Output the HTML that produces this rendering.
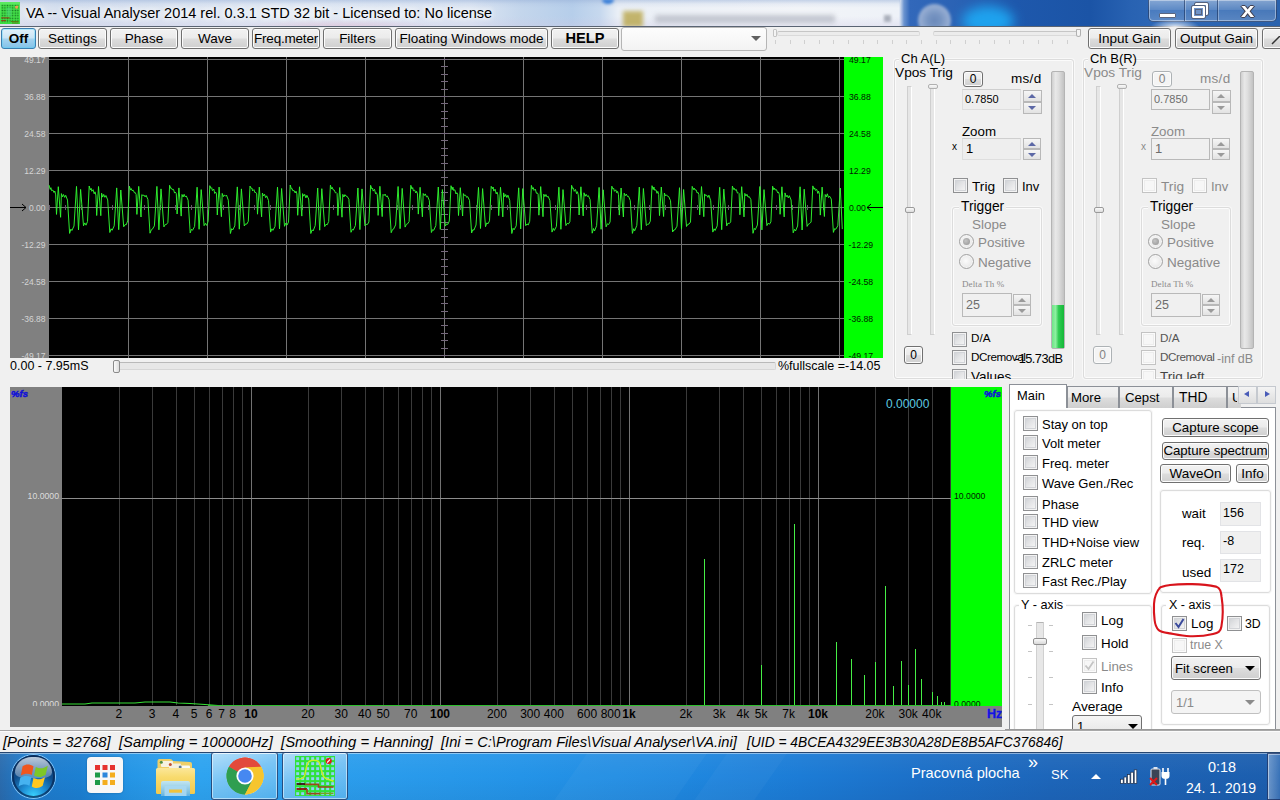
<!DOCTYPE html>
<html lang="en">
<head>
<meta charset="utf-8">
<title>VA -- Visual Analyser 2014 rel. 0.3.1 STD 32 bit - Licensed to: No license</title>
<style>
*{box-sizing:border-box;margin:0;padding:0}
html,body{width:1280px;height:800px;overflow:hidden;background:#f0f0f0}
body{position:relative;font-family:"Liberation Sans",sans-serif;font-size:13px;color:#000}
.a{position:absolute}
.t{position:absolute;white-space:nowrap;line-height:1}
.btn{position:absolute;border:1px solid #707070;border-radius:3px;background:linear-gradient(#f2f2f2 0%,#ebebeb 48%,#dddddd 52%,#cfcfcf 100%);box-shadow:inset 0 0 0 1px #fcfcfc;text-align:center;white-space:nowrap;font-size:13.5px;line-height:19px;color:#000;overflow:hidden}
.btn.dis{border-color:#adb2b5;background:#f4f4f4;color:#838383}
.cb{position:absolute;width:15px;height:15px;border:1px solid #8f9092;background:linear-gradient(135deg,#c9ccd0 0%,#e2e3e5 45%,#f9f9f9 100%);box-shadow:inset 0 0 0 1px #f3f3f3,inset 0 0 0 2px #d2d4d8}
.cb.dis{border-color:#c3c3c3;box-shadow:inset 0 0 0 1px #fbfbfb,inset 0 0 0 2px #ededed;background:#f7f7f7}
.rb{position:absolute;width:15px;height:15px;border:1px solid #a2a2a2;border-radius:50%;background:radial-gradient(circle at 45% 45%,#fbfbfb 0%,#ececec 55%,#d6d6d6 100%);box-shadow:inset 0 0 0 1px #f6f6f6}
.gb{position:absolute;border:1px solid #dcdcdc;border-radius:3px;box-shadow:inset 0 0 0 1px #fbfbfb,0 0 0 1px #f8f8f8}
.ed{position:absolute;border:1px solid #dedede;border-top-color:#cfcfcf;background:#eeeeee;font-size:12px;line-height:17px;padding-left:3px;white-space:nowrap}
.ed.dis{border-color:#b9b9b9;color:#6d6d6d;background:#f0f0f0}
.spin{position:absolute;width:17px;height:11px;border:1px solid #b8b8b8;background:linear-gradient(#f6f6f6,#e2e2e2)}
.spin i{position:absolute;left:4px;width:0;height:0;border-left:4.5px solid transparent;border-right:4.5px solid transparent}
.spin.u i{top:3px;border-bottom:4px solid #5c68a6}
.spin.d i{top:3px;border-top:4px solid #5c68a6}
.spin.dis.u i{border-bottom-color:#9a9a9a}
.spin.dis.d i{border-top-color:#9a9a9a}
.g{color:#8a8a8a}

.ed.ro{border-color:#e2e3e6;background:#f0f0f0;padding-left:2px;font-size:12.5px !important}
.gb{pointer-events:none}
.lbl{position:absolute;white-space:nowrap;line-height:1;font-size:14px}
</style>
</head>
<body>
<!-- title bar (aero glass) -->
<div class="a" id="titlebar" style="left:0;top:0;width:1280px;height:27px;overflow:hidden;background:linear-gradient(90deg,#e3e8f0 0px,#d6e0ef 60px,#e4ebf5 300px,#dde6f3 470px,#c4d6ec 520px,#b6ceea 572px,#c6d8ee 600px,#eaeff6 618px,#f2f4f8 800px,#eef2f8 899px,#6a93cf 904px,#3268ba 910px,#2a62b4 960px,#1e58ac 1015px,#1b54a6 1090px,#2862b2 1130px,#2e68b6 1160px,#2a62ad 1280px)">
  <div class="a" style="left:0;top:0;width:900px;height:27px;background:linear-gradient(180deg,rgba(150,175,215,.5) 0,rgba(150,175,215,.12) 4px,rgba(255,255,255,0) 8px,rgba(255,255,255,0) 60%,rgba(205,200,228,.35) 100%)"></div>
  <div class="a" style="left:240px;top:19px;width:200px;height:8px;background:radial-gradient(ellipse at 50% 100%,rgba(225,170,195,.4),rgba(225,170,195,0) 70%)"></div>
  <div class="a" style="left:623px;top:11px;width:20px;height:16px;background:#b9a64a;filter:blur(2px);opacity:.8"></div>
  <div class="a" style="left:655px;top:15px;width:180px;height:8px;background:#b8bcc6;filter:blur(2.5px);opacity:.8"></div>
  <div class="a" style="left:918px;top:4px;width:33px;height:33px;border-radius:50%;background:radial-gradient(circle,#6f8cba 0%,#7f9ac4 30%,#9db2d4 60%,#a6bad8 100%);filter:blur(1.5px);opacity:.92"></div>
  <div class="a" style="left:884px;top:15px;width:7px;height:7px;background:#9aa0ac;filter:blur(1.5px);opacity:.8"></div>
  <div class="a" style="left:962px;top:6px;width:52px;height:30px;border-radius:50%;background:#1ea6f2;filter:blur(6px);opacity:.95"></div>
  <div class="a" style="left:602px;top:-1px;width:12px;height:5px;border-radius:0 0 6px 6px;background:#3a7fd8;filter:blur(1.5px)"></div>
</div>
<div class="a" style="left:0;top:26px;width:1280px;height:1px;background:#5a6473"></div>
<!-- app icon -->
<svg class="a" style="left:0px;top:2px" width="20" height="22" viewBox="0 0 20 22">
  <defs><pattern id="icg" x="1" y="2" width="2.6" height="2.6" patternUnits="userSpaceOnUse"><rect width="2.6" height="2.6" fill="#45e64a"/><rect x=".6" y=".6" width="1.4" height="1.4" fill="#0a5a16"/></pattern>
  <linearGradient id="icb" x1="0" y1="0" x2="0" y2="1"><stop offset="0" stop-color="#5cea62"/><stop offset="1" stop-color="#38e040"/></linearGradient></defs>
  <rect width="20" height="22" fill="url(#icb)"/>
  <rect x="1" y="2.5" width="18" height="18.2" fill="url(#icg)" opacity=".85"/>
  <rect x="6.5" y="5.5" width="5" height="9" fill="#4fdc7c" opacity=".55"/>
  <path d="M15 4.2 L18.3 3.6 L17.6 6.8 L15.4 6.4 Z" fill="#f0a050"/>
  <path d="M1.2 15.8 H9.5 M1.2 18.6 H6" stroke="#8a4a18" stroke-width="1.3" opacity=".9"/>
  <path d="M11 19.5 H18.6 M12 21 H18.6" stroke="#5a7a10" stroke-width="1" opacity=".9"/>
</svg>
<div class="t" style="left:26px;top:6px;font-size:14.5px;color:#000;text-shadow:0 0 6px #fff,0 0 6px #fff">VA -- Visual Analyser 2014 rel. 0.3.1 STD 32 bit - Licensed to: No license</div>
<!-- window buttons -->
<div class="a" style="left:1148px;top:-1px;width:129px;height:23px;border:1px solid rgba(20,40,80,.6);border-radius:0 0 5px 5px;background:linear-gradient(rgba(255,255,255,.42),rgba(255,255,255,.24) 45%,rgba(255,255,255,.14) 50%,rgba(255,255,255,.22));box-shadow:inset 0 0 0 1px rgba(255,255,255,.4)"></div>
<div class="a" style="left:1150px;top:19px;width:50px;height:8px;background:radial-gradient(ellipse at 50% 100%,rgba(255,255,255,.85),rgba(255,255,255,0) 70%)"></div>
<div class="a" style="left:1184px;top:0;width:1px;height:21px;background:rgba(20,40,80,.55);box-shadow:1px 0 0 rgba(255,255,255,.3)"></div>
<div class="a" style="left:1217px;top:0;width:1px;height:21px;background:rgba(20,40,80,.55);box-shadow:1px 0 0 rgba(255,255,255,.3)"></div>
<div class="a" style="left:1159px;top:13px;width:17px;height:5px;background:#fff;border:1px solid #5a6680;border-radius:1px"></div>
<div class="a" style="left:1195px;top:3px;width:13px;height:12px;border:2px solid #fff;outline:1px solid #56627c;border-radius:1px"></div>
<div class="a" style="left:1192px;top:6px;width:13px;height:12px;border:2px solid #fff;outline:1px solid #56627c;background:#6f93c8;border-radius:1px"></div>
<div class="a" style="left:1196px;top:10px;width:5px;height:4px;outline:1px solid #56627c"></div>
<div class="t" style="left:1241px;top:0px;font-size:20px;font-weight:bold;color:#fff;text-shadow:0 0 1px #334,1px 0 0 #445,-1px 0 0 #445,0 1px 0 #445,0 -1px 0 #445;transform:scaleX(1.2);transform-origin:0 0">x</div>
<!-- toolbar -->
<div class="a" style="left:0;top:27px;width:1280px;height:24px;background:#f0f0f0"></div>
<div class="btn" style="left:1px;top:28px;width:35px;height:21px;font-weight:bold;border-color:#3c7fb1;background:linear-gradient(#e3f1fa 0%,#c9e4f5 48%,#a5d3ef 52%,#84c2e8 100%);box-shadow:inset 0 0 0 1px #48d8fb55">Off</div>
<div class="btn" style="left:38px;top:28px;width:69px;height:21px">Settings</div>
<div class="btn" style="left:110px;top:28px;width:68px;height:21px">Phase</div>
<div class="btn" style="left:181px;top:28px;width:68px;height:21px">Wave</div>
<div class="btn" style="left:252px;top:28px;width:68px;height:21px;letter-spacing:-.2px">Freq.meter</div>
<div class="btn" style="left:323px;top:28px;width:69px;height:21px">Filters</div>
<div class="btn" style="left:395px;top:28px;width:153px;height:21px">Floating Windows mode</div>
<div class="btn" style="left:551px;top:28px;width:68px;height:21px;font-weight:bold;font-size:14.6px;line-height:18px">HELP</div>
<div class="a" style="left:621px;top:27px;width:146px;height:24px;border:1px solid #b5b5b5;border-radius:3px;background:linear-gradient(#fdfdfd,#f3f3f3)"></div>
<div class="a" style="left:751px;top:36px;width:0;height:0;border-left:5px solid transparent;border-right:5px solid transparent;border-top:5px solid #606060"></div>
<!-- toolbar sliders -->
<div class="a" style="left:777px;top:31px;width:143px;height:5px;border:1px solid #dadada;border-top-color:#c6c6c6;background:#ececec;border-radius:2px"></div>
<div class="a" style="left:933px;top:31px;width:145px;height:5px;border:1px solid #dadada;border-top-color:#c6c6c6;background:#ececec;border-radius:2px"></div>
<div class="a" style="left:773px;top:29px;width:4px;height:8px;border:1px solid #c4c4c4;background:#f4f4f4;border-radius:1px"></div>
<div class="a" style="left:1076px;top:29px;width:5px;height:8px;border:1px solid #b0b0b0;background:#f4f4f4;border-radius:1px 1px 3px 3px"></div>
<div class="a" style="left:775px;top:40px;width:306px;height:4px;background:repeating-linear-gradient(90deg,#d0d0d0 0,#d0d0d0 1px,transparent 1px,transparent 14.6px)"></div>
<div class="btn" style="left:1088px;top:28px;width:83px;height:21px">Input Gain</div>
<div class="btn" style="left:1175px;top:28px;width:83px;height:21px">Output Gain</div>
<div class="btn" style="left:1262px;top:28px;width:30px;height:21px;border-radius:3px 0 0 3px"></div>
<svg class="a" style="left:1270px;top:36px" width="10" height="10"><path d="M2 8 L10 0" stroke="#333" stroke-width="1.5" fill="none"/></svg>
<!-- oscilloscope -->
<svg class="a" style="left:10px;top:57px" width="873" height="301" viewBox="0 0 873 301" shape-rendering="crispEdges">
<rect x="0" y="0" width="39" height="301" fill="#808080"/>
<rect x="39" y="0" width="795" height="301" fill="#000"/>
<rect x="834" y="0" width="39" height="301" fill="#00ff00"/>
<rect x="118" y="0" width="1" height="301" fill="#747474"/><rect x="197" y="0" width="1" height="301" fill="#747474"/><rect x="276" y="0" width="1" height="301" fill="#747474"/><rect x="355" y="0" width="1" height="301" fill="#747474"/><rect x="434" y="0" width="1" height="301" fill="#747474"/><rect x="513" y="0" width="1" height="301" fill="#747474"/><rect x="592" y="0" width="1" height="301" fill="#747474"/><rect x="671" y="0" width="1" height="301" fill="#747474"/><rect x="750" y="0" width="1" height="301" fill="#747474"/><rect x="829" y="0" width="1" height="301" fill="#747474"/><rect x="39" y="2" width="795" height="1" fill="#747474"/><rect x="39" y="39" width="795" height="1" fill="#747474"/><rect x="39" y="76" width="795" height="1" fill="#747474"/><rect x="39" y="113" width="795" height="1" fill="#747474"/><rect x="39" y="150" width="795" height="1" fill="#747474"/><rect x="39" y="187" width="795" height="1" fill="#747474"/><rect x="39" y="224" width="795" height="1" fill="#747474"/><rect x="39" y="261" width="795" height="1" fill="#747474"/><rect x="39" y="298" width="795" height="1" fill="#747474"/><rect x="431" y="2" width="7" height="1" fill="#75687c"/><rect x="431" y="9" width="7" height="1" fill="#75687c"/><rect x="431" y="17" width="7" height="1" fill="#75687c"/><rect x="431" y="24" width="7" height="1" fill="#75687c"/><rect x="431" y="32" width="7" height="1" fill="#75687c"/><rect x="431" y="39" width="7" height="1" fill="#75687c"/><rect x="431" y="46" width="7" height="1" fill="#75687c"/><rect x="431" y="54" width="7" height="1" fill="#75687c"/><rect x="431" y="61" width="7" height="1" fill="#75687c"/><rect x="431" y="69" width="7" height="1" fill="#75687c"/><rect x="431" y="76" width="7" height="1" fill="#75687c"/><rect x="431" y="83" width="7" height="1" fill="#75687c"/><rect x="431" y="91" width="7" height="1" fill="#75687c"/><rect x="431" y="98" width="7" height="1" fill="#75687c"/><rect x="431" y="106" width="7" height="1" fill="#75687c"/><rect x="431" y="113" width="7" height="1" fill="#75687c"/><rect x="431" y="120" width="7" height="1" fill="#75687c"/><rect x="431" y="128" width="7" height="1" fill="#75687c"/><rect x="431" y="135" width="7" height="1" fill="#75687c"/><rect x="431" y="143" width="7" height="1" fill="#75687c"/><rect x="431" y="150" width="7" height="1" fill="#75687c"/><rect x="431" y="157" width="7" height="1" fill="#75687c"/><rect x="431" y="165" width="7" height="1" fill="#75687c"/><rect x="431" y="172" width="7" height="1" fill="#75687c"/><rect x="431" y="180" width="7" height="1" fill="#75687c"/><rect x="431" y="187" width="7" height="1" fill="#75687c"/><rect x="431" y="194" width="7" height="1" fill="#75687c"/><rect x="431" y="202" width="7" height="1" fill="#75687c"/><rect x="431" y="209" width="7" height="1" fill="#75687c"/><rect x="431" y="217" width="7" height="1" fill="#75687c"/><rect x="431" y="224" width="7" height="1" fill="#75687c"/><rect x="431" y="231" width="7" height="1" fill="#75687c"/><rect x="431" y="239" width="7" height="1" fill="#75687c"/><rect x="431" y="246" width="7" height="1" fill="#75687c"/><rect x="431" y="254" width="7" height="1" fill="#75687c"/><rect x="431" y="261" width="7" height="1" fill="#75687c"/><rect x="431" y="268" width="7" height="1" fill="#75687c"/><rect x="431" y="276" width="7" height="1" fill="#75687c"/><rect x="431" y="283" width="7" height="1" fill="#75687c"/><rect x="431" y="291" width="7" height="1" fill="#75687c"/><rect x="431" y="298" width="7" height="1" fill="#75687c"/><rect x="39" y="148" width="1" height="5" fill="#66586a"/><rect x="55" y="148" width="1" height="5" fill="#66586a"/><rect x="71" y="148" width="1" height="5" fill="#66586a"/><rect x="86" y="148" width="1" height="5" fill="#66586a"/><rect x="102" y="148" width="1" height="5" fill="#66586a"/><rect x="118" y="148" width="1" height="5" fill="#66586a"/><rect x="134" y="148" width="1" height="5" fill="#66586a"/><rect x="150" y="148" width="1" height="5" fill="#66586a"/><rect x="165" y="148" width="1" height="5" fill="#66586a"/><rect x="181" y="148" width="1" height="5" fill="#66586a"/><rect x="197" y="148" width="1" height="5" fill="#66586a"/><rect x="213" y="148" width="1" height="5" fill="#66586a"/><rect x="229" y="148" width="1" height="5" fill="#66586a"/><rect x="244" y="148" width="1" height="5" fill="#66586a"/><rect x="260" y="148" width="1" height="5" fill="#66586a"/><rect x="276" y="148" width="1" height="5" fill="#66586a"/><rect x="292" y="148" width="1" height="5" fill="#66586a"/><rect x="308" y="148" width="1" height="5" fill="#66586a"/><rect x="323" y="148" width="1" height="5" fill="#66586a"/><rect x="339" y="148" width="1" height="5" fill="#66586a"/><rect x="355" y="148" width="1" height="5" fill="#66586a"/><rect x="371" y="148" width="1" height="5" fill="#66586a"/><rect x="387" y="148" width="1" height="5" fill="#66586a"/><rect x="402" y="148" width="1" height="5" fill="#66586a"/><rect x="418" y="148" width="1" height="5" fill="#66586a"/><rect x="434" y="148" width="1" height="5" fill="#66586a"/><rect x="450" y="148" width="1" height="5" fill="#66586a"/><rect x="466" y="148" width="1" height="5" fill="#66586a"/><rect x="481" y="148" width="1" height="5" fill="#66586a"/><rect x="497" y="148" width="1" height="5" fill="#66586a"/><rect x="513" y="148" width="1" height="5" fill="#66586a"/><rect x="529" y="148" width="1" height="5" fill="#66586a"/><rect x="545" y="148" width="1" height="5" fill="#66586a"/><rect x="560" y="148" width="1" height="5" fill="#66586a"/><rect x="576" y="148" width="1" height="5" fill="#66586a"/><rect x="592" y="148" width="1" height="5" fill="#66586a"/><rect x="608" y="148" width="1" height="5" fill="#66586a"/><rect x="624" y="148" width="1" height="5" fill="#66586a"/><rect x="639" y="148" width="1" height="5" fill="#66586a"/><rect x="655" y="148" width="1" height="5" fill="#66586a"/><rect x="671" y="148" width="1" height="5" fill="#66586a"/><rect x="687" y="148" width="1" height="5" fill="#66586a"/><rect x="703" y="148" width="1" height="5" fill="#66586a"/><rect x="718" y="148" width="1" height="5" fill="#66586a"/><rect x="734" y="148" width="1" height="5" fill="#66586a"/><rect x="750" y="148" width="1" height="5" fill="#66586a"/><rect x="766" y="148" width="1" height="5" fill="#66586a"/><rect x="782" y="148" width="1" height="5" fill="#66586a"/><rect x="797" y="148" width="1" height="5" fill="#66586a"/><rect x="813" y="148" width="1" height="5" fill="#66586a"/><rect x="829" y="148" width="1" height="5" fill="#66586a"/>
<polyline shape-rendering="auto" fill="none" stroke="#2ff52f" stroke-width="0.95" stroke-linejoin="round" points="39.0,128.1 40.2,132.4 40.9,130.7 41.6,133.7 42.9,133.1 44.0,135.5 44.8,134.0 45.7,137.9 46.5,157.4 48.3,129.7 50.6,160.3 51.4,136.6 52.5,139.9 53.5,137.5 54.7,140.4 55.7,138.3 57.5,143.1 59.6,176.4 60.9,172.1 61.9,173.5 64.0,169.0 66.5,129.4 68.5,172.9 70.6,132.4 73.5,168.8 74.8,165.9 76.0,168.2 77.5,164.5 79.2,129.0 80.4,133.0 81.1,131.3 81.8,134.3 83.1,132.7 84.2,136.8 85.0,134.8 85.9,138.1 86.7,158.5 88.5,129.5 90.8,158.7 91.6,136.2 92.7,140.1 93.7,137.4 94.9,140.3 95.9,138.5 97.7,142.9 99.8,175.5 101.1,171.8 102.1,173.3 104.2,168.9 106.7,130.9 108.7,172.7 110.8,133.0 113.7,169.8 115.0,167.6 116.2,167.8 117.7,163.9 119.4,129.2 120.6,133.1 121.3,131.6 122.0,133.6 123.3,133.3 124.4,135.8 125.2,135.5 126.1,137.4 126.9,157.4 128.7,129.4 131.0,160.0 131.8,137.6 132.9,138.6 133.9,138.0 135.1,139.9 136.1,138.3 137.9,142.5 140.0,176.2 141.3,172.8 142.3,172.3 144.4,168.9 146.9,129.4 148.9,172.8 151.0,131.9 153.9,169.9 155.2,167.6 156.4,167.5 157.9,165.4 159.6,128.3 160.8,131.5 161.5,131.1 162.2,132.7 163.5,132.4 164.6,136.1 165.4,135.1 166.3,136.7 167.1,157.0 168.9,130.9 171.2,159.1 172.0,137.5 173.1,140.0 174.1,137.3 175.3,140.0 176.3,138.9 178.1,143.2 180.2,175.9 181.5,172.2 182.5,173.3 184.6,169.5 187.1,130.2 189.1,172.3 191.2,132.6 194.1,168.7 195.4,166.3 196.6,168.4 198.1,164.5 199.8,128.7 201.0,131.4 201.7,130.7 202.4,133.6 203.7,132.0 204.8,136.5 205.6,135.1 206.5,136.5 207.3,158.0 209.1,130.1 211.4,159.7 212.2,136.4 213.3,139.7 214.3,137.9 215.5,139.2 216.5,138.1 218.3,143.2 220.4,176.5 221.7,171.7 222.7,173.0 224.8,168.9 227.3,129.9 229.3,172.2 231.4,131.9 234.3,169.0 235.6,166.9 236.8,167.1 238.3,164.3 240.0,129.1 241.2,131.4 241.9,131.0 242.6,133.9 243.9,132.6 245.0,135.8 245.8,135.4 246.7,136.8 247.5,157.2 249.3,130.1 251.6,159.8 252.4,136.0 253.5,139.0 254.5,137.2 255.7,140.7 256.7,138.8 258.5,143.5 260.6,175.1 261.9,171.8 262.9,173.4 265.0,169.4 267.5,130.1 269.5,171.9 271.6,131.5 274.5,169.3 275.8,166.1 277.0,168.1 278.5,165.1 280.2,128.0 281.4,131.9 282.1,131.5 282.8,133.8 284.1,133.5 285.2,136.0 286.0,134.2 286.9,136.9 287.7,158.3 289.5,129.8 291.8,159.1 292.6,136.6 293.7,139.2 294.7,137.3 295.9,140.9 296.9,138.3 298.7,142.0 300.8,176.5 302.1,172.8 303.1,174.0 305.2,168.6 307.7,131.0 309.7,173.2 311.8,131.7 314.7,169.6 316.0,167.3 317.2,167.8 318.7,164.5 320.4,128.2 321.6,132.0 322.3,130.4 323.0,132.7 324.3,133.1 325.4,135.9 326.2,135.5 327.1,136.5 327.9,158.5 329.7,130.5 332.0,160.2 332.8,137.4 333.9,140.0 334.9,137.6 336.1,139.2 337.1,139.3 338.9,142.3 341.0,175.3 342.3,172.4 343.3,173.1 345.4,168.5 347.9,131.0 349.9,172.6 352.0,131.9 354.9,168.8 356.2,167.4 357.4,167.5 358.9,165.0 360.6,128.3 361.8,131.8 362.5,131.0 363.2,134.1 364.5,132.3 365.6,136.8 366.4,135.7 367.3,137.9 368.1,158.4 369.9,129.3 372.2,159.6 373.0,137.4 374.1,138.5 375.1,137.1 376.3,139.7 377.3,138.9 379.1,142.8 381.2,175.7 382.5,172.6 383.5,172.2 385.6,167.9 388.1,129.5 390.1,171.7 392.2,131.4 395.1,170.1 396.4,167.3 397.6,166.8 399.1,164.5 400.8,128.3 402.0,132.0 402.7,130.6 403.4,133.8 404.7,133.1 405.8,136.0 406.6,134.3 407.5,137.0 408.3,157.1 410.1,130.3 412.4,159.8 413.2,136.5 414.3,138.5 415.3,136.9 416.5,139.9 417.5,139.1 419.3,143.4 421.4,175.5 422.7,172.6 423.7,173.3 425.8,168.6 428.3,130.0 430.3,172.4 432.4,132.6 435.3,169.1 436.6,167.0 437.8,167.4 439.3,164.0 441.0,128.7 442.2,132.7 442.9,130.1 443.6,133.4 444.9,132.8 446.0,137.0 446.8,135.7 447.7,137.1 448.5,158.5 450.3,130.7 452.6,159.0 453.4,136.6 454.5,138.6 455.5,138.1 456.7,140.4 457.7,139.6 459.5,143.4 461.6,176.0 462.9,172.5 463.9,173.2 466.0,168.0 468.5,130.4 470.5,171.5 472.6,131.6 475.5,169.7 476.8,165.9 478.0,166.8 479.5,163.8 481.2,129.3 482.4,131.7 483.1,130.0 483.8,134.1 485.1,132.2 486.2,136.9 487.0,135.2 487.9,137.9 488.7,158.6 490.5,130.3 492.8,159.9 493.6,135.9 494.7,139.8 495.7,137.5 496.9,140.5 497.9,138.2 499.7,143.3 501.8,176.5 503.1,171.3 504.1,172.8 506.2,168.8 508.7,130.8 510.7,171.9 512.8,131.6 515.7,168.7 517.0,166.9 518.2,168.0 519.7,164.3 521.4,128.4 522.6,132.1 523.3,130.6 524.0,133.4 525.3,132.1 526.4,136.3 527.2,135.8 528.1,137.1 528.9,158.2 530.7,129.6 533.0,159.7 533.8,137.2 534.9,139.6 535.9,137.5 537.1,140.1 538.1,139.2 539.9,143.6 542.0,175.1 543.3,171.4 544.3,173.5 546.4,169.4 548.9,130.2 550.9,172.3 553.0,132.6 555.9,168.6 557.2,166.3 558.4,167.0 559.9,164.7 561.6,128.3 562.8,131.8 563.5,131.2 564.2,134.3 565.5,132.5 566.6,136.7 567.4,134.7 568.3,137.9 569.1,158.0 570.9,129.8 573.2,158.9 574.0,135.8 575.1,139.3 576.1,137.3 577.3,139.5 578.3,138.6 580.1,142.6 582.2,176.2 583.5,171.5 584.5,174.0 586.6,168.7 589.1,130.4 591.1,172.3 593.2,132.8 596.1,169.8 597.4,166.8 598.6,167.5 600.1,164.9 601.8,129.2 603.0,132.1 603.7,131.3 604.4,134.3 605.7,132.8 606.8,135.8 607.6,134.4 608.5,137.7 609.3,158.1 611.1,131.0 613.4,160.0 614.2,136.2 615.3,138.7 616.3,137.1 617.5,139.5 618.5,139.3 620.3,143.5 622.4,176.4 623.7,171.7 624.7,173.8 626.8,168.4 629.3,130.1 631.3,172.8 633.4,131.5 636.3,168.5 637.6,167.3 638.8,167.1 640.3,164.2 642.0,128.7 643.2,132.6 643.9,130.0 644.6,133.2 645.9,132.8 647.0,136.3 647.8,134.4 648.7,137.5 649.5,158.6 651.3,130.0 653.6,159.5 654.4,136.0 655.5,138.9 656.5,137.8 657.7,139.4 658.7,139.6 660.5,143.6 662.6,175.0 663.9,172.9 664.9,172.9 667.0,169.2 669.5,130.7 671.5,172.0 673.6,132.5 676.5,169.5 677.8,167.3 679.0,167.1 680.5,165.0 682.2,129.4 683.4,132.6 684.1,131.0 684.8,132.8 686.1,132.9 687.2,136.0 688.0,135.3 688.9,137.6 689.7,157.9 691.5,129.6 693.8,159.7 694.6,136.9 695.7,138.7 696.7,138.2 697.9,140.4 698.9,138.2 700.7,143.7 702.8,175.1 704.1,171.8 705.1,173.5 707.2,168.9 709.7,130.3 711.7,172.7 713.8,132.1 716.7,168.9 718.0,166.1 719.2,166.7 720.7,164.9 722.4,129.1 723.6,132.4 724.3,131.3 725.0,133.2 726.3,132.5 727.4,136.1 728.2,135.6 729.1,136.5 729.9,157.8 731.7,129.7 734.0,159.9 734.8,136.4 735.9,139.0 736.9,137.3 738.1,140.2 739.1,139.4 740.9,142.6 743.0,176.3 744.3,171.4 745.3,172.7 747.4,168.0 749.9,129.5 751.9,172.9 754.0,132.6 756.9,168.6 758.2,166.1 759.4,167.3 760.9,164.9 762.6,129.2 763.8,132.7 764.5,131.1 765.2,132.9 766.5,132.7 767.6,135.7 768.4,134.9 769.3,137.4 770.1,157.3 771.9,129.8 774.2,159.9 775.0,135.9 776.1,139.8 777.1,138.2 778.3,140.9 779.3,138.7 781.1,143.0 783.2,175.8 784.5,172.3 785.5,174.0 787.6,169.0 790.1,129.8 792.1,173.0 794.2,132.2 797.1,169.4 798.4,167.1 799.6,166.6 801.1,165.0 802.8,128.9 804.0,132.3 804.7,130.9 805.4,133.4 806.7,132.3 807.8,136.4 808.6,134.1 809.5,137.3 810.3,158.1 812.1,130.1 814.4,159.5 815.2,137.5 816.3,140.0 817.3,136.8 818.5,140.6 819.5,139.1 821.3,142.1 823.4,175.4 824.7,171.6 825.7,172.3 827.8,168.8 830.3,131.0 832.3,172.1"/>
<text x="35.5" y="6" text-anchor="end" font-family="Liberation Sans, sans-serif" font-size="8.5" fill="#d4d4d4">49.17</text>
<text x="839.0" y="6" font-family="Liberation Sans, sans-serif" font-size="8.7" fill="#032003">49.17</text>
<text x="35.5" y="43" text-anchor="end" font-family="Liberation Sans, sans-serif" font-size="8.5" fill="#d4d4d4">36.88</text>
<text x="839.0" y="43" font-family="Liberation Sans, sans-serif" font-size="8.7" fill="#032003">36.88</text>
<text x="35.5" y="80" text-anchor="end" font-family="Liberation Sans, sans-serif" font-size="8.5" fill="#d4d4d4">24.58</text>
<text x="839.0" y="80" font-family="Liberation Sans, sans-serif" font-size="8.7" fill="#032003">24.58</text>
<text x="35.5" y="117" text-anchor="end" font-family="Liberation Sans, sans-serif" font-size="8.5" fill="#d4d4d4">12.29</text>
<text x="839.0" y="117" font-family="Liberation Sans, sans-serif" font-size="8.7" fill="#032003">12.29</text>
<text x="35.5" y="154" text-anchor="end" font-family="Liberation Sans, sans-serif" font-size="8.5" fill="#d4d4d4">0.00</text>
<text x="839" y="154" font-family="Liberation Sans, sans-serif" font-size="8.7" fill="#032003">0.00</text>
<text x="35.5" y="191" text-anchor="end" font-family="Liberation Sans, sans-serif" font-size="8.5" fill="#d4d4d4">-12.29</text>
<text x="838.5" y="191" font-family="Liberation Sans, sans-serif" font-size="8.7" fill="#032003">-12.29</text>
<text x="35.5" y="228" text-anchor="end" font-family="Liberation Sans, sans-serif" font-size="8.5" fill="#d4d4d4">-24.58</text>
<text x="838.5" y="228" font-family="Liberation Sans, sans-serif" font-size="8.7" fill="#032003">-24.58</text>
<text x="35.5" y="265" text-anchor="end" font-family="Liberation Sans, sans-serif" font-size="8.5" fill="#d4d4d4">-36.88</text>
<text x="838.5" y="265" font-family="Liberation Sans, sans-serif" font-size="8.7" fill="#032003">-36.88</text>
<text x="35.5" y="302" text-anchor="end" font-family="Liberation Sans, sans-serif" font-size="8.5" fill="#d4d4d4">-49.17</text>
<text x="838.5" y="302" font-family="Liberation Sans, sans-serif" font-size="8.7" fill="#032003">-49.17</text>
<path shape-rendering="auto" d="M0 150.5 H16 M12 147 L16 150.5 L12 154" stroke="#000" stroke-width="1" fill="none"/>
<path shape-rendering="auto" d="M873 150.5 H857 M861 147 L857 150.5 L861 154" stroke="#000" stroke-width="1" fill="none"/>
</svg>
<div class="t" style="left:10px;top:360px;font-size:12.5px">0.00 - 7.95mS</div>
<div class="a" style="left:115px;top:362px;width:661px;height:8px;border:1px solid #d6d6d6;border-top-color:#b9b9b9;background:#e7e7e7;border-radius:2px"></div>
<div class="a" style="left:113px;top:360px;width:7px;height:13px;border:1px solid #8a8a8a;border-radius:2px;background:linear-gradient(90deg,#fafafa,#dcdcdc)"></div>
<div class="t" style="left:778px;top:360px;font-size:12.5px">%fullscale =-14.05</div>
<!-- spectrum -->
<svg class="a" style="left:10px;top:387px" width="992" height="340" viewBox="0 0 992 340" shape-rendering="crispEdges">
<rect x="0" y="0" width="992" height="340" fill="#808080"/>
<rect x="52" y="0" width="889" height="319" fill="#000"/>
<rect x="941" y="0" width="51" height="319" fill="#00ff00"/>
<rect x="109" y="0" width="1" height="318" fill="#3a3a3a"/><rect x="142" y="0" width="1" height="318" fill="#3a3a3a"/><rect x="166" y="0" width="1" height="318" fill="#3a3a3a"/><rect x="184" y="0" width="1" height="318" fill="#3a3a3a"/><rect x="199" y="0" width="1" height="318" fill="#3a3a3a"/><rect x="212" y="0" width="1" height="318" fill="#3a3a3a"/><rect x="223" y="0" width="1" height="318" fill="#3a3a3a"/><rect x="232" y="0" width="1" height="318" fill="#3a3a3a"/><rect x="241" y="0" width="1" height="318" fill="#727272"/><rect x="298" y="0" width="1" height="318" fill="#3a3a3a"/><rect x="331" y="0" width="1" height="318" fill="#3a3a3a"/><rect x="355" y="0" width="1" height="318" fill="#3a3a3a"/><rect x="373" y="0" width="1" height="318" fill="#3a3a3a"/><rect x="388" y="0" width="1" height="318" fill="#3a3a3a"/><rect x="401" y="0" width="1" height="318" fill="#3a3a3a"/><rect x="412" y="0" width="1" height="318" fill="#3a3a3a"/><rect x="421" y="0" width="1" height="318" fill="#3a3a3a"/><rect x="430" y="0" width="1" height="318" fill="#727272"/><rect x="487" y="0" width="1" height="318" fill="#3a3a3a"/><rect x="520" y="0" width="1" height="318" fill="#3a3a3a"/><rect x="544" y="0" width="1" height="318" fill="#3a3a3a"/><rect x="562" y="0" width="1" height="318" fill="#3a3a3a"/><rect x="577" y="0" width="1" height="318" fill="#3a3a3a"/><rect x="590" y="0" width="1" height="318" fill="#3a3a3a"/><rect x="601" y="0" width="1" height="318" fill="#3a3a3a"/><rect x="610" y="0" width="1" height="318" fill="#3a3a3a"/><rect x="619" y="0" width="1" height="318" fill="#727272"/><rect x="676" y="0" width="1" height="318" fill="#3a3a3a"/><rect x="709" y="0" width="1" height="318" fill="#3a3a3a"/><rect x="733" y="0" width="1" height="318" fill="#3a3a3a"/><rect x="751" y="0" width="1" height="318" fill="#3a3a3a"/><rect x="766" y="0" width="1" height="318" fill="#3a3a3a"/><rect x="779" y="0" width="1" height="318" fill="#3a3a3a"/><rect x="790" y="0" width="1" height="318" fill="#3a3a3a"/><rect x="799" y="0" width="1" height="318" fill="#3a3a3a"/><rect x="808" y="0" width="1" height="318" fill="#727272"/><rect x="865" y="0" width="1" height="318" fill="#3a3a3a"/><rect x="898" y="0" width="1" height="318" fill="#3a3a3a"/><rect x="922" y="0" width="1" height="318" fill="#3a3a3a"/><rect x="940" y="0" width="1" height="318" fill="#3a3a3a"/><rect x="48" y="111" width="893" height="1" fill="#8c8c8c"/>
<rect x="694" y="172" width="1" height="146" fill="#46ee46"/><rect x="751" y="278" width="1" height="40" fill="#46ee46"/><rect x="784" y="137" width="1" height="181" fill="#46ee46"/><rect x="826" y="255" width="1" height="63" fill="#46ee46"/><rect x="841" y="272" width="1" height="46" fill="#46ee46"/><rect x="854" y="288" width="1" height="30" fill="#46ee46"/><rect x="865" y="275" width="1" height="43" fill="#46ee46"/><rect x="875" y="199" width="1" height="119" fill="#46ee46"/><rect x="883" y="299" width="1" height="19" fill="#46ee46"/><rect x="891" y="274" width="1" height="44" fill="#46ee46"/><rect x="898" y="298" width="1" height="20" fill="#46ee46"/><rect x="905" y="262" width="1" height="56" fill="#46ee46"/><rect x="911" y="292" width="1" height="26" fill="#46ee46"/><rect x="922" y="305" width="1" height="13" fill="#46ee46"/><rect x="927" y="309" width="1" height="9" fill="#46ee46"/><rect x="931" y="315" width="1" height="3" fill="#46ee46"/><rect x="934" y="315" width="1" height="3" fill="#46ee46"/>
<path shape-rendering="auto" d="M52 317 L75 317 L82 316 L125 316 L135 315 L160 315 L168 316 L180 316.5 L195 317.5 L208 318.5" stroke="#38e038" stroke-width="1.1" fill="none"/><rect x="198" y="318" width="743" height="1" fill="#2fc02f"/>
<text x="108.9" y="331" text-anchor="middle" font-family="Liberation Sans, sans-serif" font-size="12" fill="#000">2</text>
<text x="142.2" y="331" text-anchor="middle" font-family="Liberation Sans, sans-serif" font-size="12" fill="#000">3</text>
<text x="165.8" y="331" text-anchor="middle" font-family="Liberation Sans, sans-serif" font-size="12" fill="#000">4</text>
<text x="184.1" y="331" text-anchor="middle" font-family="Liberation Sans, sans-serif" font-size="12" fill="#000">5</text>
<text x="199.1" y="331" text-anchor="middle" font-family="Liberation Sans, sans-serif" font-size="12" fill="#000">6</text>
<text x="211.7" y="331" text-anchor="middle" font-family="Liberation Sans, sans-serif" font-size="12" fill="#000">7</text>
<text x="222.7" y="331" text-anchor="middle" font-family="Liberation Sans, sans-serif" font-size="12" fill="#000">8</text>
<text x="241.0" y="331" text-anchor="middle" font-family="Liberation Sans, sans-serif" font-size="12" font-weight="bold" fill="#000">10</text>
<text x="297.9" y="331" text-anchor="middle" font-family="Liberation Sans, sans-serif" font-size="12" fill="#000">20</text>
<text x="331.2" y="331" text-anchor="middle" font-family="Liberation Sans, sans-serif" font-size="12" fill="#000">30</text>
<text x="354.8" y="331" text-anchor="middle" font-family="Liberation Sans, sans-serif" font-size="12" fill="#000">40</text>
<text x="373.1" y="331" text-anchor="middle" font-family="Liberation Sans, sans-serif" font-size="12" fill="#000">50</text>
<text x="400.7" y="331" text-anchor="middle" font-family="Liberation Sans, sans-serif" font-size="12" fill="#000">70</text>
<text x="430.0" y="331" text-anchor="middle" font-family="Liberation Sans, sans-serif" font-size="12" font-weight="bold" fill="#000">100</text>
<text x="486.9" y="331" text-anchor="middle" font-family="Liberation Sans, sans-serif" font-size="12" fill="#000">200</text>
<text x="520.2" y="331" text-anchor="middle" font-family="Liberation Sans, sans-serif" font-size="12" fill="#000">300</text>
<text x="543.8" y="331" text-anchor="middle" font-family="Liberation Sans, sans-serif" font-size="12" fill="#000">400</text>
<text x="577.1" y="331" text-anchor="middle" font-family="Liberation Sans, sans-serif" font-size="12" fill="#000">600</text>
<text x="600.7" y="331" text-anchor="middle" font-family="Liberation Sans, sans-serif" font-size="12" fill="#000">800</text>
<text x="619.0" y="331" text-anchor="middle" font-family="Liberation Sans, sans-serif" font-size="12" font-weight="bold" fill="#000">1k</text>
<text x="675.9" y="331" text-anchor="middle" font-family="Liberation Sans, sans-serif" font-size="12" fill="#000">2k</text>
<text x="709.2" y="331" text-anchor="middle" font-family="Liberation Sans, sans-serif" font-size="12" fill="#000">3k</text>
<text x="732.8" y="331" text-anchor="middle" font-family="Liberation Sans, sans-serif" font-size="12" fill="#000">4k</text>
<text x="751.1" y="331" text-anchor="middle" font-family="Liberation Sans, sans-serif" font-size="12" fill="#000">5k</text>
<text x="778.7" y="331" text-anchor="middle" font-family="Liberation Sans, sans-serif" font-size="12" fill="#000">7k</text>
<text x="808.0" y="331" text-anchor="middle" font-family="Liberation Sans, sans-serif" font-size="12" font-weight="bold" fill="#000">10k</text>
<text x="864.9" y="331" text-anchor="middle" font-family="Liberation Sans, sans-serif" font-size="12" fill="#000">20k</text>
<text x="898.2" y="331" text-anchor="middle" font-family="Liberation Sans, sans-serif" font-size="12" fill="#000">30k</text>
<text x="921.8" y="331" text-anchor="middle" font-family="Liberation Sans, sans-serif" font-size="12" fill="#000">40k</text>
<text x="977" y="331" font-family="Liberation Sans, sans-serif" font-size="12.5" font-weight="bold" fill="#1212e6" stroke="#1212e6" stroke-width=".3">Hz</text>
<text x="49" y="112" text-anchor="end" font-family="Liberation Sans, sans-serif" font-size="8.7" fill="#dcdcdc">10.0000</text>
<text x="944" y="112" font-family="Liberation Sans, sans-serif" font-size="8.7" fill="#032003">10.0000</text>
<svg x="0" y="300" width="60" height="19"><text x="49" y="20" text-anchor="end" font-family="Liberation Sans, sans-serif" font-size="8.7" fill="#dcdcdc">0.0000</text></svg>
<svg x="940" y="300" width="52" height="19"><text x="4" y="20" font-family="Liberation Sans, sans-serif" font-size="8.7" fill="#032003">0.0000</text></svg>
<text x="1" y="9.5" font-family="Liberation Sans, sans-serif" font-size="9.6" font-weight="bold" font-style="italic" fill="#1010d8" stroke="#1010d8" stroke-width=".45">%fs</text>
<text x="974" y="9.5" font-family="Liberation Sans, sans-serif" font-size="9.6" font-weight="bold" font-style="italic" fill="#1010d8" stroke="#1010d8" stroke-width=".45">%fs</text>
<text x="876" y="21" font-family="Liberation Sans, sans-serif" font-size="12" fill="#5ecbe0">0.00000</text>
</svg>
<!-- channel A -->
<div class="gb" style="left:894px;top:59px;width:180px;height:320px"></div>
<div class="a" style="left:899px;top:52px;width:46px;height:14px;background:#f0f0f0"></div>
<div class="lbl" style="left:901px;top:52px;font-size:13px">Ch A(L)</div>
<div class="lbl" style="left:895px;top:66px;font-size:13.7px">Vpos Trig</div>
<div class="a" style="left:907px;top:86px;width:5px;height:249px;border:1px solid #cfcfcf;border-right-color:#fff;background:#e6e6e6"></div>
<div class="a" style="left:930px;top:86px;width:5px;height:249px;border:1px solid #cfcfcf;border-right-color:#fff;background:#e6e6e6"></div>
<div class="a" style="left:905px;top:207px;width:10px;height:6px;border:1px solid #9a9a9a;border-radius:2px;background:linear-gradient(#fafafa,#dcdcdc)"></div>
<div class="a" style="left:928px;top:84px;width:10px;height:5px;border:1px solid #b0b0b0;border-radius:2px;background:linear-gradient(#fafafa,#e4e4e4)"></div>
<div class="btn" style="left:963px;top:71px;width:20px;height:16px;font-size:12px;line-height:14px">0</div>
<div class="lbl" style="left:1011px;top:72px;font-size:13.5px;letter-spacing:.3px">ms/d</div>
<div class="ed" style="left:962px;top:89px;width:59px;height:21px;font-size:11px;line-height:19px;padding-left:2px">0.7850</div>
<div class="spin u" style="left:1023px;top:90px;width:19px;height:12px"><i></i></div>
<div class="spin d" style="left:1023px;top:102px;width:19px;height:12px"><i></i></div>
<div class="lbl" style="left:962px;top:125px;font-size:13.3px">Zoom</div>
<div class="lbl" style="left:952px;top:142px;font-size:10px">x</div>
<div class="ed" style="left:962px;top:138px;width:59px;height:22px;font-size:13px;line-height:19px">1</div>
<div class="spin u" style="left:1023px;top:138px;width:18px;height:11px"><i></i></div>
<div class="spin d" style="left:1023px;top:149px;width:18px;height:11px"><i></i></div>
<div class="cb" style="left:953px;top:178px"></div>
<div class="lbl" style="left:972px;top:180px;font-size:13.7px">Trig</div>
<div class="cb" style="left:1003px;top:178px"></div>
<div class="lbl" style="left:1022px;top:180px;font-size:13px">Inv</div>
<div class="gb" style="left:952px;top:207px;width:90px;height:119px"></div>
<div class="a" style="left:959px;top:200px;width:47px;height:14px;background:#f0f0f0"></div>
<div class="lbl" style="left:961px;top:200px;font-size:13.8px">Trigger</div>
<div class="lbl g" style="left:972px;top:218px;font-size:13.5px">Slope</div>
<div class="rb" style="left:959px;top:234px"><div class="a" style="left:3px;top:3px;width:7px;height:7px;border-radius:50%;background:radial-gradient(circle at 40% 40%,#c4c4c4,#929292)"></div></div>
<div class="lbl g" style="left:978px;top:236px;font-size:13.4px">Positive</div>
<div class="rb" style="left:959px;top:254px"></div>
<div class="lbl g" style="left:978px;top:256px;font-size:13.5px">Negative</div>
<div class="lbl g" style="left:962px;top:280px;font-size:9px;font-family:'Liberation Serif',serif;letter-spacing:.1px">Delta Th %</div>
<div class="ed dis" style="left:962px;top:293px;width:50px;height:24px;font-size:12.5px;line-height:22px;padding-left:3px">25</div>
<div class="spin u dis" style="left:1013px;top:294px;width:18px;height:11px"><i></i></div>
<div class="spin d dis" style="left:1013px;top:305px;width:18px;height:11px"><i></i></div>
<div class="a" style="left:945px;top:328px;width:130px;height:51px;overflow:hidden">
<div class="cb" style="left:7px;top:4px"></div><div class="lbl" style="left:26px;top:4px;font-size:11.7px">D/A</div>
<div class="cb" style="left:7px;top:22px"></div><div class="lbl" style="left:26px;top:23px;font-size:11.7px;letter-spacing:-.45px">DCremoval</div>
<div class="cb" style="left:7px;top:41px"></div><div class="lbl" style="left:26px;top:42px;font-size:13.5px">Values</div>
</div>
<div class="btn" style="left:904px;top:346px;width:19px;height:18px;font-size:12px;line-height:16px">0</div>
<div class="a" style="left:1051px;top:71px;width:14px;height:278px;border:1px solid #b4b4b4;border-radius:2px;background:linear-gradient(90deg,#cfcfcf 0%,#e8e8e8 30%,#dedede 55%,#c2c2c2 100%)"></div>
<div class="a" style="left:1052px;top:305px;width:12px;height:43px;background:linear-gradient(90deg,#6fe388 0%,#8df0a0 30%,#2fcb52 55%,#14b838 100%)"></div>
<div class="lbl" style="left:1015px;top:353px;font-size:12.8px;letter-spacing:-.55px">-15.73dB</div>
<!-- channel B -->
<div class="gb" style="left:1083px;top:59px;width:180px;height:320px"></div>
<div class="a" style="left:1088px;top:52px;width:46px;height:14px;background:#f0f0f0"></div>
<div class="lbl" style="left:1090px;top:52px;font-size:13px">Ch B(R)</div>
<div class="lbl g" style="left:1084px;top:66px;font-size:13.7px">Vpos Trig</div>
<div class="a" style="left:1096px;top:86px;width:5px;height:249px;border:1px solid #cfcfcf;border-right-color:#fff;background:#e6e6e6"></div>
<div class="a" style="left:1119px;top:86px;width:5px;height:249px;border:1px solid #cfcfcf;border-right-color:#fff;background:#e6e6e6"></div>
<div class="a" style="left:1094px;top:207px;width:10px;height:6px;border:1px solid #9a9a9a;border-radius:2px;background:linear-gradient(#fafafa,#dcdcdc)"></div>
<div class="a" style="left:1117px;top:84px;width:10px;height:5px;border:1px solid #b0b0b0;border-radius:2px;background:linear-gradient(#fafafa,#e4e4e4)"></div>
<div class="btn dis" style="left:1152px;top:71px;width:20px;height:16px;font-size:12px;line-height:14px">0</div>
<div class="lbl g" style="left:1200px;top:72px;font-size:13.5px;letter-spacing:.3px">ms/d</div>
<div class="ed dis" style="left:1151px;top:89px;width:59px;height:21px;font-size:11px;line-height:19px;padding-left:2px">0.7850</div>
<div class="spin u dis" style="left:1212px;top:90px;width:19px;height:12px"><i></i></div>
<div class="spin d dis" style="left:1212px;top:102px;width:19px;height:12px"><i></i></div>
<div class="lbl g" style="left:1151px;top:125px;font-size:13.3px">Zoom</div>
<div class="lbl g" style="left:1141px;top:142px;font-size:10px">x</div>
<div class="ed dis" style="left:1151px;top:138px;width:59px;height:22px;font-size:13px;line-height:19px">1</div>
<div class="spin u dis" style="left:1212px;top:138px;width:18px;height:11px"><i></i></div>
<div class="spin d dis" style="left:1212px;top:149px;width:18px;height:11px"><i></i></div>
<div class="cb dis" style="left:1142px;top:178px"></div>
<div class="lbl g" style="left:1161px;top:180px;font-size:13.7px">Trig</div>
<div class="cb dis" style="left:1192px;top:178px"></div>
<div class="lbl g" style="left:1211px;top:180px;font-size:13px">Inv</div>
<div class="gb" style="left:1141px;top:207px;width:90px;height:119px"></div>
<div class="a" style="left:1148px;top:200px;width:47px;height:14px;background:#f0f0f0"></div>
<div class="lbl" style="left:1150px;top:200px;font-size:13.8px">Trigger</div>
<div class="lbl g" style="left:1161px;top:218px;font-size:13.5px">Slope</div>
<div class="rb" style="left:1148px;top:234px"><div class="a" style="left:3px;top:3px;width:7px;height:7px;border-radius:50%;background:radial-gradient(circle at 40% 40%,#c4c4c4,#929292)"></div></div>
<div class="lbl g" style="left:1167px;top:236px;font-size:13.4px">Positive</div>
<div class="rb" style="left:1148px;top:254px"></div>
<div class="lbl g" style="left:1167px;top:256px;font-size:13.5px">Negative</div>
<div class="lbl g" style="left:1151px;top:280px;font-size:9px;font-family:'Liberation Serif',serif;letter-spacing:.1px">Delta Th %</div>
<div class="ed dis" style="left:1151px;top:293px;width:50px;height:24px;font-size:12.5px;line-height:22px;padding-left:3px">25</div>
<div class="spin u dis" style="left:1202px;top:294px;width:18px;height:11px"><i></i></div>
<div class="spin d dis" style="left:1202px;top:305px;width:18px;height:11px"><i></i></div>
<div class="a" style="left:1134px;top:328px;width:130px;height:51px;overflow:hidden">
<div class="cb dis" style="left:7px;top:4px"></div><div class="lbl" style="left:26px;top:4px;font-size:11.7px;color:#555">D/A</div>
<div class="cb dis" style="left:7px;top:22px"></div><div class="lbl" style="left:26px;top:23px;font-size:11.7px;letter-spacing:-.45px;color:#555">DCremoval</div>
<div class="cb dis" style="left:7px;top:41px"></div><div class="lbl" style="left:26px;top:42px;font-size:13.5px;color:#444">Trig left</div>
</div>
<div class="btn dis" style="left:1093px;top:346px;width:19px;height:18px;font-size:12px;line-height:16px">0</div>
<div class="a" style="left:1240px;top:71px;width:14px;height:278px;border:1px solid #b4b4b4;border-radius:2px;background:linear-gradient(90deg,#cfcfcf 0%,#e8e8e8 30%,#dedede 55%,#c2c2c2 100%)"></div>
<div class="lbl g" style="left:1217px;top:353px;font-size:12.5px">-inf dB</div>
<!-- tab control -->
<div class="a" id="tabs" style="left:1005px;top:382px;width:275px;height:348px;overflow:hidden">
 <div class="a" style="left:4px;top:25px;width:267px;height:330px;border:1px solid #8c9097;background:#fff"></div>
 <!-- inactive tabs -->
 <div class="a tab" style="left:62px;top:4px;width:52px;height:22px;border:1px solid #8c9097;border-bottom:none;background:linear-gradient(#f2f2f2 0%,#ebebeb 48%,#dddddd 52%,#cfcfcf 100%)"></div>
 <div class="a tab" style="left:114px;top:4px;width:54px;height:22px;border:1px solid #8c9097;border-bottom:none;background:linear-gradient(#f2f2f2 0%,#ebebeb 48%,#dddddd 52%,#cfcfcf 100%)"></div>
 <div class="a tab" style="left:168px;top:4px;width:54px;height:22px;border:1px solid #8c9097;border-bottom:none;background:linear-gradient(#f2f2f2 0%,#ebebeb 48%,#dddddd 52%,#cfcfcf 100%)"></div>
 <div class="a tab" style="left:222px;top:4px;width:14px;height:22px;border:1px solid #8c9097;border-bottom:none;border-right:none;background:linear-gradient(#f2f2f2 0%,#ebebeb 48%,#dddddd 52%,#cfcfcf 100%)"></div>
 <div class="lbl" style="left:66px;top:9px;font-size:13.2px">More</div>
 <div class="lbl" style="left:120px;top:9px;font-size:13.2px">Cepst</div>
 <div class="lbl" style="left:174px;top:9px;font-size:13.8px">THD</div>
 <div class="a" style="left:226px;top:9px;width:6px;height:14px;overflow:hidden"><div class="lbl" style="left:1px;top:0;font-size:13.5px">U</div></div>
 <!-- active tab -->
 <div class="a" style="left:4px;top:2px;width:58px;height:24px;border:1px solid #8c9097;border-bottom:none;background:#fff"></div>
 <div class="lbl" style="left:12px;top:8px;font-size:12.9px">Main</div>
 <!-- scroll buttons -->
 <div class="a" style="left:233px;top:4px;width:19px;height:18px;border:1px solid #c5c9cf;background:linear-gradient(#f4f4f4,#dedede)"></div>
 <div class="a" style="left:252px;top:4px;width:19px;height:18px;border:1px solid #c5c9cf;background:linear-gradient(#f4f4f4,#dedede)"></div>
 <div class="a" style="left:239px;top:9px;width:0;height:0;border-top:3.5px solid transparent;border-bottom:3.5px solid transparent;border-right:5px solid #4a5cb8"></div>
 <div class="a" style="left:260px;top:9px;width:0;height:0;border-top:3.5px solid transparent;border-bottom:3.5px solid transparent;border-left:5px solid #4a5cb8"></div>

 <!-- left group: check list -->
 <div class="gb" style="left:9px;top:28px;width:138px;height:184px"></div>
 <div class="cb lg" style="left:18px;top:34px"></div><div class="lbl" style="left:37px;top:36px;font-size:13px">Stay on top</div>
 <div class="cb lg" style="left:18px;top:53px"></div><div class="lbl" style="left:37px;top:55px;font-size:13px">Volt meter</div>
 <div class="cb lg" style="left:18px;top:73px"></div><div class="lbl" style="left:37px;top:75px;font-size:13px">Freq. meter</div>
 <div class="cb lg" style="left:18px;top:93px"></div><div class="lbl" style="left:37px;top:95px;font-size:13px">Wave Gen./Rec</div>
 <div class="cb lg" style="left:18px;top:114px"></div><div class="lbl" style="left:37px;top:116px;font-size:13px">Phase</div>
 <div class="cb lg" style="left:18px;top:132px"></div><div class="lbl" style="left:37px;top:134px;font-size:13px">THD view</div>
 <div class="cb lg" style="left:18px;top:152px"></div><div class="lbl" style="left:37px;top:154px;font-size:13px">THD+Noise view</div>
 <div class="cb lg" style="left:18px;top:172px"></div><div class="lbl" style="left:37px;top:174px;font-size:13px">ZRLC meter</div>
 <div class="cb lg" style="left:18px;top:191px"></div><div class="lbl" style="left:37px;top:193px;font-size:13px">Fast Rec./Play</div>

 <!-- right buttons -->
 <div class="btn" style="left:157px;top:36px;width:107px;height:19px;font-size:13.3px;line-height:17px">Capture scope</div>
 <div class="btn" style="left:157px;top:60px;width:107px;height:18px;font-size:13.3px;line-height:16px;letter-spacing:-.1px">Capture spectrum</div>
 <div class="btn" style="left:155px;top:82px;width:71px;height:19px;font-size:13.5px;line-height:17px">WaveOn</div>
 <div class="btn" style="left:231px;top:82px;width:33px;height:19px;font-size:13.5px;line-height:17px">Info</div>
 <!-- wait/req/used -->
 <div class="gb" style="left:155px;top:108px;width:111px;height:103px"></div>
 <div class="lbl" style="left:177px;top:125px;font-size:13.3px">wait</div>
 <div class="lbl" style="left:177px;top:154px;font-size:13.3px">req.</div>
 <div class="lbl" style="left:177px;top:184px;font-size:13.5px">used</div>
 <div class="ed ro" style="left:215px;top:120px;width:41px;height:24px;font-size:13px;line-height:20px">156</div>
 <div class="ed ro" style="left:215px;top:149px;width:41px;height:23px;font-size:13px;line-height:19px">-8</div>
 <div class="ed ro" style="left:215px;top:177px;width:41px;height:23px;font-size:13px;line-height:19px">172</div>

 <!-- Y axis group -->
 <div class="gb" style="left:9px;top:223px;width:138px;height:140px"></div>
 <div class="a" style="left:14px;top:216px;width:47px;height:13px;background:#fff"></div>
 <div class="lbl" style="left:16px;top:217px;font-size:12.7px">Y - axis</div>
 <div class="a" style="left:31px;top:240px;width:8px;height:120px;border:1px solid #d0d0d0;border-top-color:#b4b4b4;background:#e7e7e7;border-radius:1px"></div>
 <div class="a" style="left:28px;top:256px;width:14px;height:7px;border:1px solid #8f8f8f;border-radius:2px;background:linear-gradient(#fafafa,#d8d8d8)"></div>
 <div class="a" style="left:23px;top:243px;width:4px;height:1px;background:#c4c4c4;box-shadow:0 26px 0 #c4c4c4,0 52px 0 #c4c4c4,0 79px 0 #c4c4c4,21px 0 0 #c4c4c4,21px 26px 0 #c4c4c4,21px 52px 0 #c4c4c4,21px 79px 0 #c4c4c4"></div>
 <div class="cb lg" style="left:77px;top:230px"></div><div class="lbl" style="left:96px;top:232px;font-size:13.4px">Log</div>
 <div class="cb lg" style="left:77px;top:253px"></div><div class="lbl" style="left:96px;top:255px;font-size:13.4px">Hold</div>
 <div class="cb lg dis" style="left:77px;top:276px"><svg width="13" height="13" style="position:absolute;left:0;top:0"><path d="M2.5 6.5 L5.5 10 L10.5 2.5" stroke="#c4c4c4" stroke-width="1.8" fill="none"/></svg></div><div class="lbl g" style="left:96px;top:278px;font-size:13.4px">Lines</div>
 <div class="cb lg" style="left:77px;top:297px"></div><div class="lbl" style="left:96px;top:299px;font-size:13.4px">Info</div>
 <div class="lbl" style="left:67px;top:318px;font-size:13.7px">Average</div>
 <div class="a" style="left:67px;top:333px;width:70px;height:22px;border:1px solid #707070;border-radius:3px;background:linear-gradient(#f6f6f6,#e4e4e4)"></div>
 <div class="lbl" style="left:72px;top:338px;font-size:13px">1</div>
 <div class="a" style="left:123px;top:342px;width:0;height:0;border-left:5px solid transparent;border-right:5px solid transparent;border-top:5px solid #000"></div>

 <!-- X axis group -->
 <div class="gb" style="left:156px;top:223px;width:109px;height:120px"></div>
 <div class="a" style="left:161px;top:216px;width:47px;height:13px;background:#fff"></div>
 <div class="lbl" style="left:164px;top:217px;font-size:12.5px">X - axis</div>
 <div class="cb lg" style="left:167px;top:234px"><svg width="13" height="13" style="position:absolute;left:0;top:0"><path d="M2.5 6 L5.5 10 L10.5 2" stroke="#3a4a9c" stroke-width="2" fill="none"/></svg></div><div class="lbl" style="left:186px;top:235px;font-size:13.4px">Log</div>
 <div class="cb lg" style="left:222px;top:234px"></div><div class="lbl" style="left:240px;top:236px;font-size:12.3px">3D</div>
 <div class="cb lg dis" style="left:167px;top:256px"></div><div class="lbl g" style="left:185px;top:257px;font-size:12.3px">true X</div>
 <div class="a" style="left:166px;top:274px;width:90px;height:24px;border:1px solid #707070;border-radius:3px;background:linear-gradient(#f2f2f2 0%,#ebebeb 48%,#dddddd 52%,#cfcfcf 100%);box-shadow:inset 0 0 0 1px #fcfcfc"></div>
 <div class="lbl" style="left:170px;top:280px;font-size:13.2px">Fit screen</div>
 <div class="a" style="left:240px;top:284px;width:0;height:0;border-left:5px solid transparent;border-right:5px solid transparent;border-top:5px solid #000"></div>
 <div class="a" style="left:166px;top:308px;width:90px;height:24px;border:1px solid #c0c0c0;border-radius:3px;background:#f4f4f4"></div>
 <div class="lbl g" style="left:171px;top:314px;font-size:13px">1/1</div>
 <div class="a" style="left:240px;top:318px;width:0;height:0;border-left:5px solid transparent;border-right:5px solid transparent;border-top:5px solid #8a8a8a"></div>
 <!-- red annotation -->
 <svg class="a" style="left:140px;top:195px" width="90" height="70" viewBox="1145 577 90 70"><path d="M1159.5 588 C1162 586 1166 585.6 1170 585 C1182 583.6 1202 583.6 1216 586.6 C1220.5 588 1221 592 1221.6 597 C1223 606 1223 618 1221.4 626.5 C1220.6 632 1218 633 1213 634 C1205 636 1198 636.4 1190 636.2 C1182 636 1176 634.5 1170 633.4 C1164 632.4 1160.5 632 1158.6 630 C1155.6 627 1155 624 1154.6 620 C1153.8 614 1153.8 609 1154 604 C1154.4 597 1156 592 1160 587.6" stroke="#d8141c" stroke-width="2.1" fill="none" stroke-linecap="round"/></svg>
</div>
<div class="a" style="left:1005px;top:729px;width:275px;height:1px;background:#9a9a9a"></div>
<!-- status bar -->
<div class="a" style="left:0;top:730px;width:1280px;height:1px;background:#a8a8a8"></div>
<div class="a" style="left:0;top:731px;width:1280px;height:22px;background:#f0f0f0;border-top:1px solid #fbfbfb"></div>
<div class="t" style="left:3px;top:735px;font-size:14.85px;font-style:italic">[Points = 32768]</div>
<div class="t" style="left:119px;top:735px;font-size:14.75px;font-style:italic">[Sampling = 100000Hz]</div>
<div class="t" style="left:281px;top:735px;font-size:14.9px;font-style:italic">[Smoothing = Hanning]</div>
<div class="t" style="left:441px;top:735px;font-size:14.65px;font-style:italic">[Ini = C:\Program Files\Visual Analyser\VA.ini]</div>
<div class="t" style="left:747px;top:735px;font-size:13.8px;font-style:italic;padding-top:.5px">[UID = 4BCEA4329EE3B30A28DE8B5AFC376846]</div>
<!-- taskbar -->
<div class="a" id="taskbar" style="left:0;top:752px;width:1280px;height:48px;overflow:hidden;background:linear-gradient(90deg,#2a6cae 0px,#1f7bcb 24px,#1c80d2 80px,#2596e6 130px,#2ea4f0 200px,#2a9cec 380px,#2494e8 520px,#1f88e0 680px,#1c7cd6 800px,#1c70c8 920px,#1d66ba 1050px,#1c5eae 1280px)">
 <div class="a" style="left:0;top:0;width:1280px;height:48px;background:linear-gradient(180deg,rgba(255,255,255,.05) 0,rgba(255,255,255,.0) 50%,rgba(0,0,40,.05) 100%)"></div>
 <div class="a" style="left:560px;top:-40px;width:120px;height:160px;background:rgba(255,255,255,.035);transform:skewX(-35deg)"></div>
 <div class="a" style="left:700px;top:-40px;width:60px;height:160px;background:rgba(255,255,255,.03);transform:skewX(-35deg)"></div>
 <div class="a" style="left:0;top:0;width:1280px;height:1px;background:#27466f"></div>
 <div class="a" style="left:0;top:1px;width:1280px;height:1px;background:rgba(255,255,255,.45)"></div>
 <!-- start orb -->
 <div class="a" style="left:12px;top:3px;width:43px;height:43px;border-radius:50%;background:radial-gradient(circle at 50% 96%,#3ad4ff 0%,#1f8fd6 26%,#0e4c8a 55%,#0b3a70 100%);box-shadow:0 0 0 1px rgba(150,210,255,.85),inset 0 0 0 2px rgba(8,40,84,.75)"></div>
 <div class="a" style="left:15px;top:5px;width:37px;height:21px;border-radius:19px 19px 12px 12px / 18px 18px 6px 6px;background:linear-gradient(rgba(235,240,246,.78),rgba(190,205,225,.38))"></div>
 <svg class="a" style="left:18px;top:8px" width="31" height="31" viewBox="-1 1 27 26">
  <path d="M3 6 C6 4 9 4 12.5 6 L11 13.5 C8 12 5 12 1.5 14 Z" fill="#f0561e"/>
  <path d="M14.5 6.5 C18 8.5 21 8 25 5.5 L23 13.5 C19.5 15.5 16.5 16 13 14 Z" fill="#7ec726"/>
  <path d="M1 16 C4 14 7.5 14 10.5 15.5 L9 23 C6 21.5 3 21.5 -0.5 23.5 Z" fill="#46b2f0"/>
  <path d="M12.5 16 C16 18 19 17.5 22.5 15.5 L20.5 23 C17 25.5 14 25.5 11 23.5 Z" fill="#ffc821"/>
 </svg>
 <!-- apps icon -->
 <div class="a" style="left:87px;top:5px;width:36px;height:36px;border-radius:4px;background:#f7f7f7;box-shadow:0 0 2px rgba(0,0,0,.3)"></div>
 <svg class="a" style="left:94px;top:12px" width="22" height="22" viewBox="0 0 22 22">
  <rect x="1" y="1" width="5" height="5" fill="#e6332e"/><rect x="8.5" y="1" width="5" height="5" fill="#e6332e"/><rect x="16" y="1" width="5" height="5" fill="#e6332e"/>
  <rect x="1" y="8.5" width="5" height="5" fill="#1d9a48"/><rect x="8.5" y="8.5" width="5" height="5" fill="#2a86dc"/><rect x="16" y="8.5" width="5" height="5" fill="#f4ad1c"/>
  <rect x="1" y="16" width="5" height="5" fill="#1d9a48"/><rect x="8.5" y="16" width="5" height="5" fill="#f4ad1c"/><rect x="16" y="16" width="5" height="5" fill="#f4ad1c"/>
 </svg>
 <!-- explorer folder -->
 <svg class="a" style="left:155px;top:4px" width="41" height="42" viewBox="0 0 41 42">
  <defs><linearGradient id="fg1" x1="0" y1="0" x2="0" y2="1"><stop offset="0" stop-color="#fbe79a"/><stop offset=".35" stop-color="#f8db6e"/><stop offset="1" stop-color="#f3c94c"/></linearGradient>
  <linearGradient id="fg2" x1="0" y1="0" x2="0" y2="1"><stop offset="0" stop-color="#bfe6f8"/><stop offset="1" stop-color="#62b4e4"/></linearGradient></defs>
  <path d="M2.5 5 Q2.5 3 4.5 3 L15 3 Q17 3 18 5 L35 6 Q37 6 37 8 L37 14 L2.5 14 Z" fill="#efcf68"/>
  <rect x="6" y="5" width="12" height="6" rx="1" fill="#f6f2e2"/><rect x="14" y="7.5" width="12" height="6" rx="1" fill="#f4f0e0"/><rect x="24" y="9.5" width="11" height="5" rx="1" fill="#fbfbf6"/>
  <circle cx="6.3" cy="6.2" r="1.5" fill="#4f8f44"/><circle cx="15.3" cy="8.6" r="1.5" fill="#c05030"/><circle cx="25.2" cy="11" r="1.5" fill="#5f7a8e"/>
  <rect x="1" y="12" width="39" height="26" rx="1.5" fill="url(#fg1)"/>
  <path d="M6 27 Q6 25 8 25 L33 25 Q35 25 35 27 L35 40 L6 40 Z" fill="url(#fg2)" opacity=".95"/>
  <path d="M9.5 30 L31.5 30 L31.5 40 L9.5 40 Z" fill="#a8d8f2" opacity=".9"/>
  <rect x="14" y="33.5" width="13" height="3.2" fill="#f0c23c"/>
 </svg>
 <!-- chrome button -->
 <div class="a" style="left:211px;top:0px;width:67px;height:48px;border:1px solid rgba(20,50,100,.8);border-radius:3px;background:linear-gradient(160deg,rgba(255,255,255,.62),rgba(225,245,255,.42) 45%,rgba(170,228,255,.30) 100%);box-shadow:inset 0 0 0 1px rgba(255,255,255,.5)"></div>
 <svg class="a" style="left:226px;top:5px" width="38" height="38" viewBox="-19 -19 38 38">
  <circle r="18.5" fill="#fff"/>
  <path d="M0 0 L-16.02 -9.25 A18.5 18.5 0 0 1 16.02 -9.25 Z" fill="#e24a3b"/>
  <path d="M0 0 L16.02 -9.25 A18.5 18.5 0 0 1 0 18.5 Z" fill="#f6c52e"/>
  <path d="M0 0 L0 18.5 A18.5 18.5 0 0 1 -16.02 -9.25 Z" fill="#2f9e50"/>
  <path d="M0 -8.5 L16.02 -9.25 A18.5 18.5 0 0 1 17 7 Z" fill="#f6c52e"/>
  <path d="M-7.4 -4.2 L-16.02 -9.25 A18.5 18.5 0 0 1 16.02 -9.25 L0 -8.5 Z" fill="#e24a3b"/>
  <path d="M-7.4 -4.2 L-16.02 -9.25 A18.5 18.5 0 0 0 0 18.5 L7.4 4.2 Z" fill="#2f9e50"/>
  <path d="M7.4 4.2 L0 18.5 A18.5 18.5 0 0 0 16.02 -9.25 L0 -8.5 Z" fill="#f6c52e"/>
  <circle r="8.6" fill="#fff"/><circle r="6.8" fill="#4688f1"/>
 </svg>
 <!-- VA button -->
 <div class="a" style="left:282px;top:0px;width:66px;height:48px;border:1px solid rgba(20,50,100,.8);border-radius:3px;background:linear-gradient(160deg,rgba(255,255,255,.62),rgba(225,245,255,.42) 45%,rgba(170,228,255,.30) 100%);box-shadow:inset 0 0 0 1px rgba(255,255,255,.5)"></div>
 <svg class="a" style="left:295px;top:4px" width="40" height="40" viewBox="0 0 40 40">
  <defs><pattern id="vag" width="5" height="5" patternUnits="userSpaceOnUse"><rect width="5" height="5" fill="#2fe23a"/><rect x="1.2" y="1.2" width="2.9" height="2.9" fill="#8fd2f6"/></pattern></defs>
  <rect width="40" height="40" fill="url(#vag)"/>
  <path d="M1.5 23 C6 23.5 8 23 9.5 20 C11 16 11 8 14 5.5 C17 4 21 4 23.5 5.5 C26 8 26 17 29 21 C32 24.5 36 23 38.5 25.5" stroke="#c8f028" stroke-width="1.5" fill="none"/>
  <path d="M1.5 28 H10" stroke="#3a1010" stroke-width="1.8"/><path d="M10 28.4 H23.5 V31 H38.5" stroke="#9a4a18" stroke-width="1.6" fill="none"/>
  <path d="M1.5 33 H12" stroke="#8a1208" stroke-width="1.8"/><path d="M12 33 V37.6 H25 " stroke="#9a4a18" stroke-width="1.6" fill="none"/><path d="M25 37.4 H38.5" stroke="#7aa020" stroke-width="1.5"/>
  <circle cx="33.7" cy="5" r="3.1" fill="#e21818"/><path d="M32.4 6.8 C32.6 4.8 34.6 5.2 34.8 3.2" stroke="#fff" stroke-width="1.1" fill="none"/>
 </svg>
 <!-- tray -->
 <div class="t" style="left:911px;top:14px;font-size:14.6px;color:#fff">Pracovná plocha</div>
 <div class="t" style="left:1028px;top:1px;font-size:18px;color:#fff">»</div>
 <div class="t" style="left:1051px;top:16px;font-size:13px;color:#fff">SK</div>
 <div class="a" style="left:1091px;top:22px;width:0;height:0;border-left:5px solid transparent;border-right:5px solid transparent;border-bottom:5px solid #fff"></div>
 <svg class="a" style="left:1120px;top:17px" width="18" height="15" viewBox="0 0 18 15"><g fill="#fff" stroke="#1d2b45" stroke-width=".7"><rect x=".6" y="10.2" width="2.6" height="4.2"/><rect x="4" y="8" width="2.6" height="6.4"/><rect x="7.4" y="5.6" width="2.6" height="8.8"/><rect x="10.8" y="3.2" width="2.6" height="11.2"/><rect x="14.2" y=".8" width="2.6" height="13.6"/></g></svg>
 <svg class="a" style="left:1148px;top:14px" width="23" height="22" viewBox="0 0 23 22">
  <rect x="3" y="3" width="9" height="16" rx="1" fill="#3a4456" stroke="#dfe6f0" stroke-width="1"/><rect x="5.5" y="1" width="4" height="2" fill="#dfe6f0"/>
  <path d="M2 12 L9 19 M9 12 L2 19" stroke="#e01818" stroke-width="2"/>
  <path d="M15 2 V6 M20 2 V6" stroke="#fff" stroke-width="1.6"/><path d="M13.5 6 H21.5 V10 Q21.5 13 17.5 13 Q13.5 13 13.5 10 Z" fill="#fff"/><path d="M17.5 13 V19" stroke="#fff" stroke-width="1.6"/>
 </svg>
 <div class="t" style="left:1208px;top:8px;font-size:14.4px;color:#fff">0:18</div>
 <div class="t" style="left:1186px;top:29px;font-size:14px;color:#fff">24. 1. 2019</div>
 <div class="a" style="left:1267px;top:1px;width:13px;height:47px;border:1px solid rgba(20,40,90,.7);border-right:none;background:linear-gradient(90deg,rgba(255,255,255,.35),rgba(255,255,255,.12));box-shadow:inset 1px 1px 0 rgba(255,255,255,.45)"></div>
</div>
</body>
</html>
